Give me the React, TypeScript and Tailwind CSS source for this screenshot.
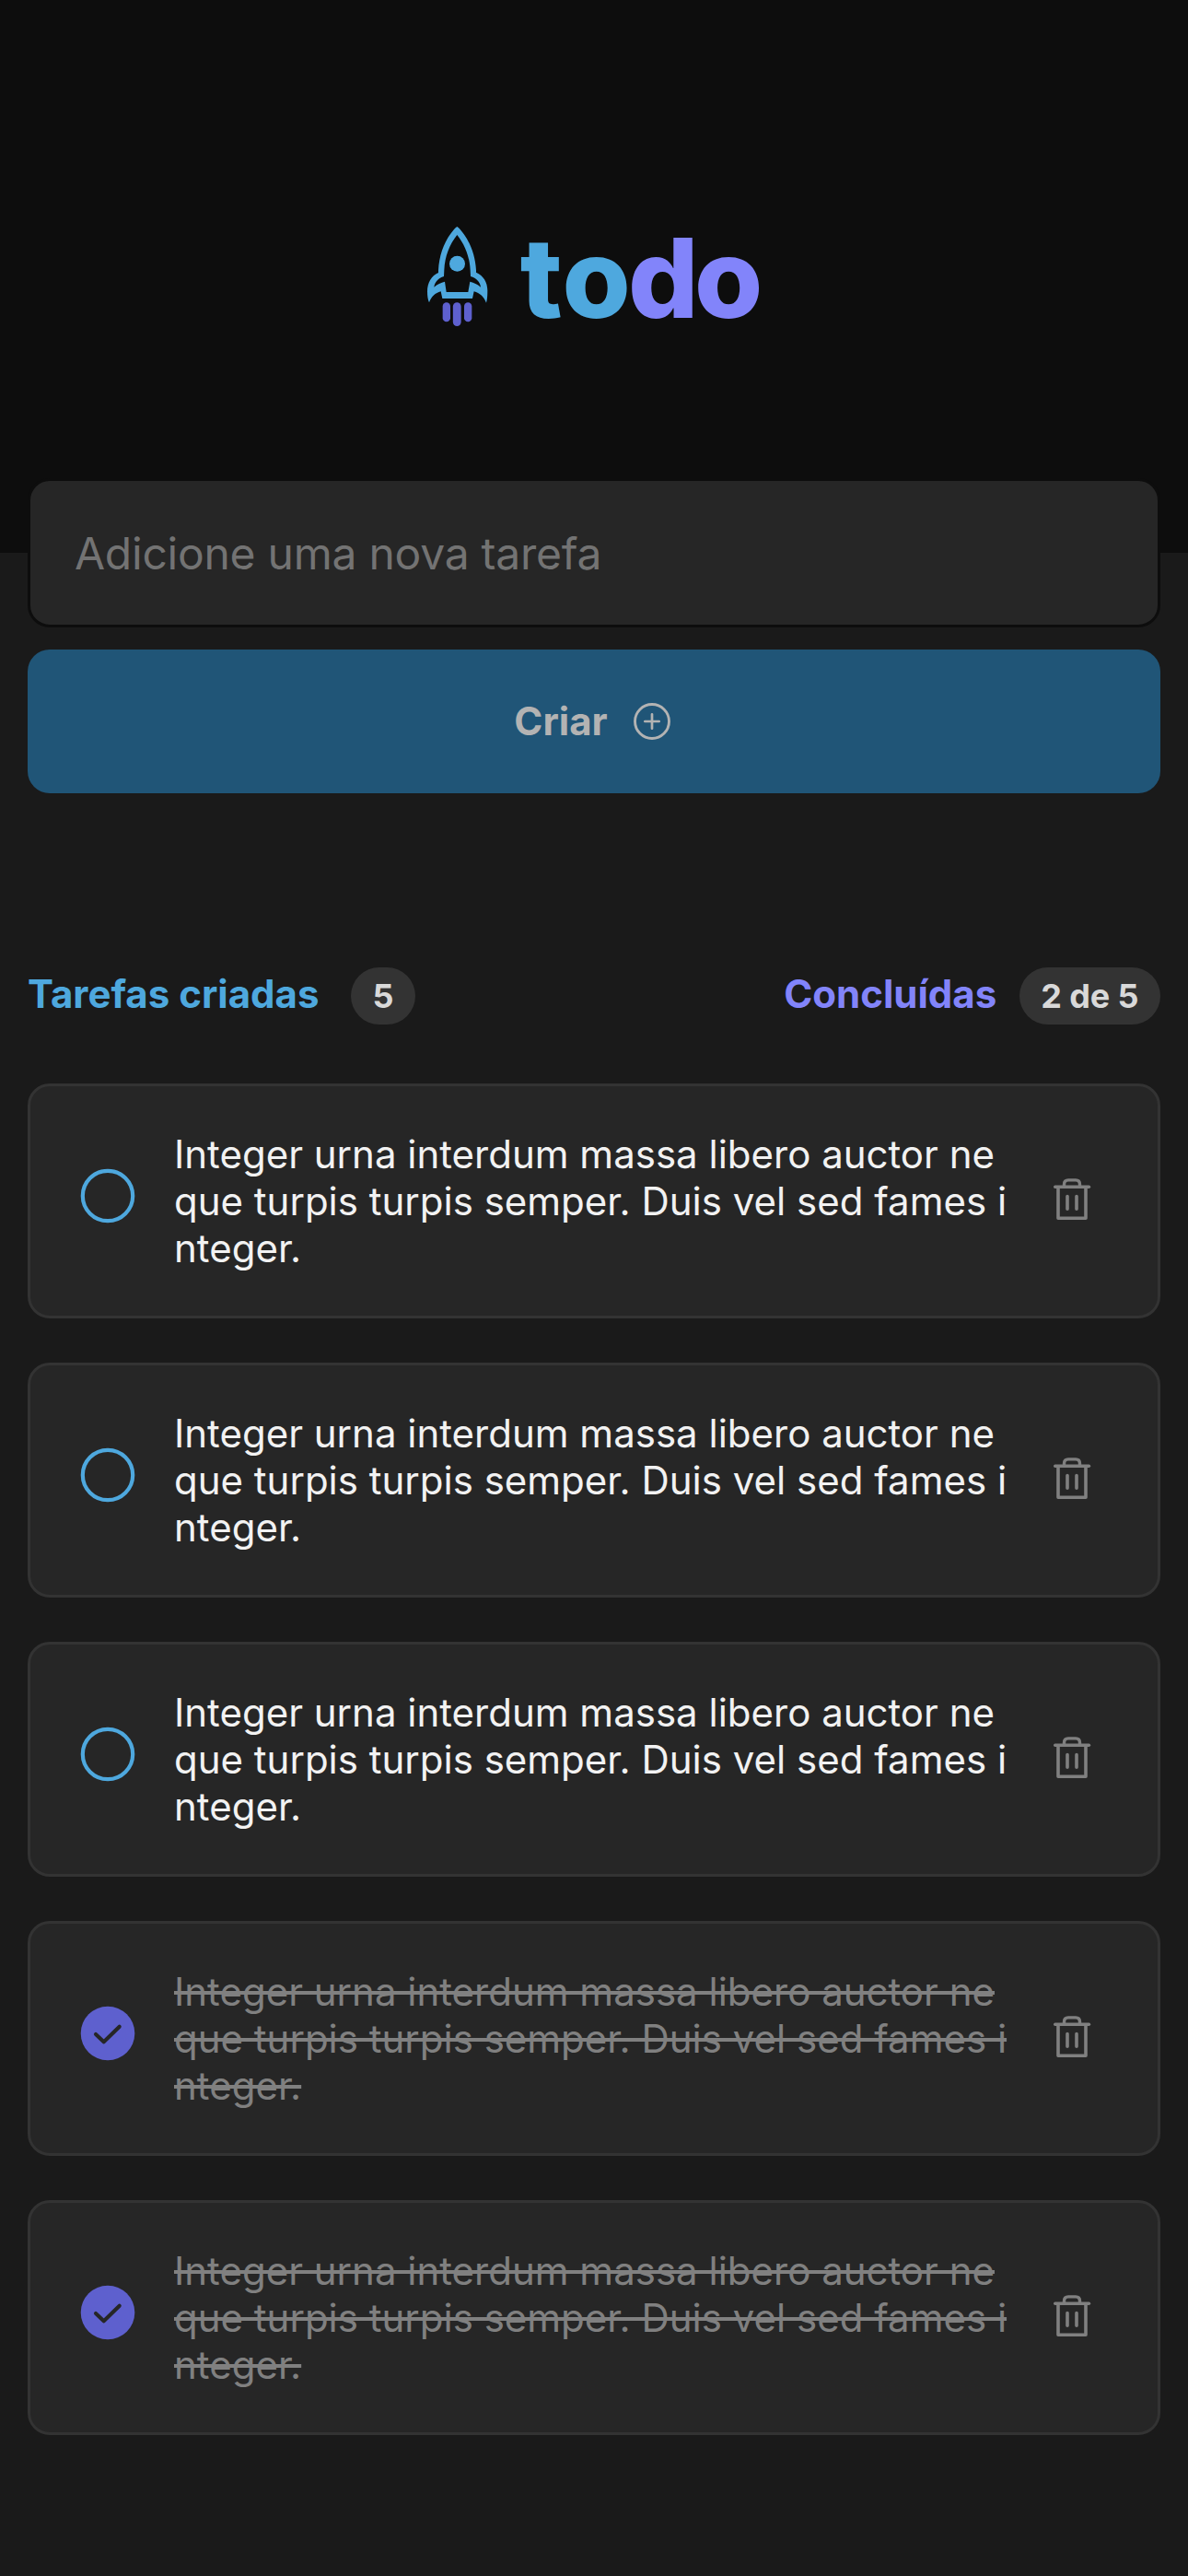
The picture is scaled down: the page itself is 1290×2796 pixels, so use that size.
const TEXT =
  "Integer urna interdum massa libero auctor neque turpis turpis semper. Duis vel sed fames integer.";

const tasks = [
  { id: 1, done: false },
  { id: 2, done: false },
  { id: 3, done: false },
  { id: 4, done: true },
  { id: 5, done: true },
];

function Rocket() {
  return (
    <svg className="h-[108px] w-[66px]" viewBox="0 0 198 324" fill="none">
      <path
        fillRule="evenodd"
        fill="#4EA8DE"
        d="M97 0Q102 3 107 9C136 42 156 88 159 142V149C184 160 197 183 196 211Q196 236 192 248C184 228 171 216 152 211L147 234H49L44 211C26 216 13 228 6 247Q0 236 0 211C0 183 13 160 36 150V142C39 88 58 42 87 9Q92 3 97 0ZM97 27C73 57 57 96 55 142L54 162C36 168 24 180 22 197C33 187 44 182 57 179L62 213H133L139 179C152 182 163 187 174 197C172 180 160 168 141 162L140 142C138 96 121 57 97 27Z"
      />
      <circle cx="97.500" cy="120.500" r="25.500" fill="#4EA8DE" />
      <rect x="50" y="247" width="25" height="63" rx="12.500" fill="#5E60CE" />
      <rect x="83.500" y="247" width="26.500" height="77" rx="13.200" fill="#5E60CE" />
      <rect x="120" y="247" width="25" height="63" rx="12.500" fill="#5E60CE" />
    </svg>
  );
}

function PlusCircle() {
  return (
    <svg className="size-10" viewBox="0 0 40 40" fill="none" stroke="#B3B3B3" strokeLinecap="round">
      <circle cx="20" cy="20" r="18.500" strokeWidth="2.900" />
      <path d="M20 12.300V27.700M12.300 20H27.700" strokeWidth="2.700" />
    </svg>
  );
}

function Trash() {
  return (
    <svg className="h-[45px] w-[41px]" viewBox="0 0 41 45" fill="none" stroke="#808080">
      <path d="M1.700 9.300H38.500" strokeWidth="3.400" strokeLinecap="round" />
      <path d="M5 9V43.200H35V9" strokeWidth="3.600" strokeLinejoin="round" />
      <path d="M11.500 8.500V6.500Q11.500 1.900 16 1.900H24Q28.500 1.900 28.500 6.500V8.500" strokeWidth="3.400" />
      <path d="M15 19.500V33.200M25 19.500V33.200" strokeWidth="3.600" strokeLinecap="round" />
    </svg>
  );
}

function Check({ done }: { done: boolean }) {
  return (
    <svg className="size-[60px]" viewBox="0 0 60 60" fill="none">
      {done ? (
        <>
          <circle cx="30" cy="30" r="29.300" fill="#5E60CE" />
          <path d="M17 31L25.700 39.300L42.700 22.700" stroke="#262626" strokeWidth="4.100" strokeLinecap="round" strokeLinejoin="round" />
        </>
      ) : (
        <circle cx="30" cy="30" r="27.200" stroke="#4EA8DE" strokeWidth="4.200" />
      )}
    </svg>
  );
}

function Badge({ children }: { children: string }) {
  return (
    <span className="flex h-[61.5px] items-center rounded-full bg-[#333333] px-[23.5px] text-[36px] font-bold tracking-[-0.1px] text-[#D9D9D9]">
      {children}
    </span>
  );
}

export default function App() {
  return (
    <div className="min-h-[2796px] bg-[#1A1A1A] font-['Inter',sans-serif]">
      <header className="flex h-[600px] justify-center gap-[35px] bg-[#0D0D0D] pt-[246px] pl-[2px]">
        <Rocket />
        <h1 className="-mt-[17px] text-[120px] leading-[145px] font-extrabold text-[#4EA8DE]">
          t<span className="tracking-[-3px]">o</span>
          <span className="tracking-[-4.5px] text-[#8284FA]">d</span>
          <span className="text-[#8284FA]">o</span>
        </h1>
      </header>

      <main className="-mt-[81px] px-[30px]">
        <form className="flex flex-col gap-6">
          <input
            className="h-[162px] w-full rounded-[24px] border-3 border-[#0D0D0D] bg-[#262626] px-12 text-[48px] tracking-[-0.25px] text-[#F2F2F2] outline-none placeholder:text-[#737373]"
            placeholder="Adicione uma nova tarefa"
          />
          <button
            type="button"
            className="flex h-[156px] items-center justify-center gap-7 rounded-[24px] bg-[#205577] pr-1 text-[42px] font-bold text-[#B3B3B3]"
          >
            <span className="-mt-0.5">Criar</span>
            <PlusCircle />
          </button>
        </form>

        <section className="mt-[189px]">
          <div className="flex h-[61.5px] items-center justify-between text-[42px] font-bold">
            <div className="flex items-center gap-[34.5px]">
              <span className="-mt-1 text-[#4EA8DE]">Tarefas criadas</span>
              <Badge>5</Badge>
            </div>
            <div className="flex items-center gap-[24.5px]">
              <span className="-mt-1 text-[#8284FA]">Concluídas</span>
              <Badge>2 de 5</Badge>
            </div>
          </div>

          <ul className="mt-[64.5px] flex flex-col gap-12">
            {tasks.map((task) => (
              <li
                key={task.id}
                className="flex h-[255px] items-center rounded-[24px] border-3 border-[#333333] bg-[#262626] pl-[54px]"
              >
                <div className="-mt-3">
                  <Check done={task.done} />
                </div>
                <p
                  className={
                    task.done
                      ? "ml-[42px] w-[909px] text-[42px] leading-[51px] break-all text-[#808080] line-through"
                      : "ml-[42px] w-[909px] text-[42px] leading-[51px] break-all text-[#F2F2F2]"
                  }
                >
                  {TEXT}
                </p>
                <button type="button" className="-mt-1 ml-[46px]">
                  <Trash />
                </button>
              </li>
            ))}
          </ul>
        </section>
      </main>
    </div>
  );
}
